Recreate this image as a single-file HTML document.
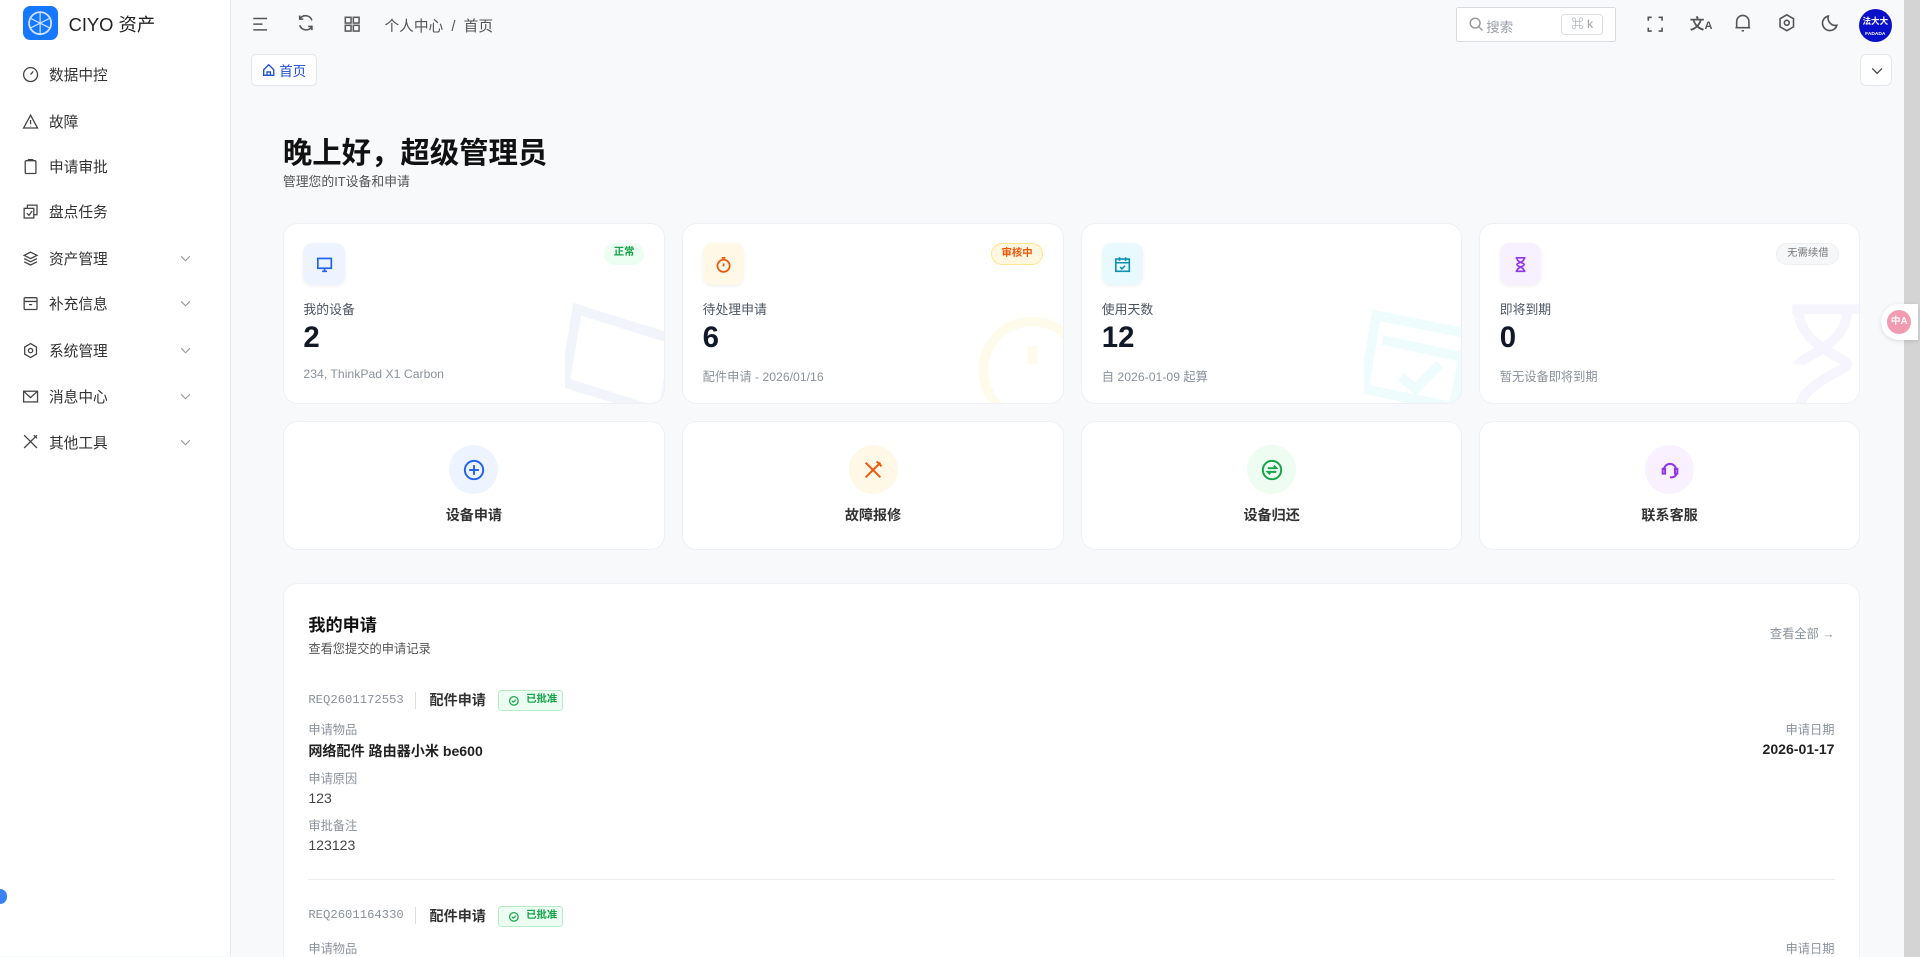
<!DOCTYPE html>
<html><head><meta charset="utf-8">
<style>
html{zoom:1.22449;overflow:hidden;background:#f8f9fb}
*{box-sizing:border-box;margin:0;padding:0}
body{width:1568px;height:781px;overflow:hidden;font-family:"Liberation Sans","Noto Sans CJK SC",sans-serif;background:#f8f9fb;color:#1f2937;position:relative}
.side{position:absolute;left:0;top:0;width:189px;height:781px;background:#fff;border-right:1px solid #e5e7eb}
.logo{position:absolute;left:19px;top:5px;width:28px;height:28px;border-radius:6px;background:#1677ff}
.brand{position:absolute;left:56px;top:9px;font-size:15px;color:#222}
.mi{position:absolute;left:18px;height:20px;display:flex;align-items:center;font-size:12px;color:#333;width:150px}
.mi svg{width:14px;height:14px;margin-right:8px}
.mi .ch{position:absolute;right:4px;width:9px;height:9px}
.top svg{position:absolute}
.crumb{position:absolute;left:314px;top:12px;font-size:12px;color:#555}
.search{position:absolute;left:1189px;top:6px;width:131px;height:28px;border:1px solid #d9dbe0;background:#fff;border-radius:2px;font-size:11px;color:#9aa0a8}
.kbd{position:absolute;right:10px;top:5px;width:34px;height:17px;border:1px solid #ddd;border-radius:3px;font-size:10px;text-align:center;line-height:15px}
.avatar{position:absolute;left:1518px;top:7px;width:27px;height:27px;border-radius:50%;background:#0a10c8;color:#fff;font-size:7px;font-weight:bold;text-align:center;line-height:9px;padding-top:6px}
.tab{position:absolute;left:205px;top:44px;width:54px;height:26px;background:#fff;border:1px solid #e5e7eb;border-radius:4px;font-size:11px;color:#1d4ed8;display:flex;align-items:center;justify-content:center;gap:3px}
.dd{position:absolute;left:1519px;top:44px;width:26px;height:26px;background:#fff;border:1px solid #e5e7eb;border-radius:5px}
.card{position:absolute;background:#fff;border:1px solid #eef0f3;border-radius:12px;overflow:hidden}
.ico{position:absolute;left:16px;top:16px;width:34px;height:34px;border-radius:8px;display:flex;align-items:center;justify-content:center;box-shadow:0 1px 3px rgba(0,0,0,.06)}
.lab{position:absolute;left:16px;top:61px;font-size:10.5px;color:#4b5563}
.num{position:absolute;left:16px;top:79px;font-size:24px;font-weight:bold;color:#111827}
.sub{position:absolute;left:16px;top:117px;font-size:10px;color:#8b929c}
.badge{position:absolute;right:16px;top:16px;height:18px;padding:0 8px;border-radius:9px;font-size:8.5px;line-height:17px;font-weight:bold}
.act{text-align:center}
.act .c{width:40px;height:40px;border-radius:50%;margin:19px auto 0;display:flex;align-items:center;justify-content:center}
.act .t{margin-top:9px;font-size:11.5px;color:#333;font-weight:bold}
.scroll{position:absolute;left:1555px;top:0;width:13px;height:782px;background:#d4d4d4}
.g{font-size:10px;color:#8b929c;position:absolute}
.ok{position:absolute;height:17px;width:53px;border:1px solid #b7ebc5;background:#ecfdf1;border-radius:3px;color:#16a34a;font-size:8.5px;line-height:15px;padding-left:22px;font-weight:bold}
</style></head><body>
<div class="side">
 <div class="logo"><svg width="28" height="28" viewBox="0 0 28 28"><circle cx="14" cy="14" r="9" fill="none" stroke="#cfe2ff" stroke-width="1.5"/><path d="M14 5v18M6 10l16 8M6 18l16-8" stroke="#cfe2ff" stroke-width="1"/></svg></div>
 <div class="brand">CIYO 资产</div>
 <div class="mi" style="top:51px"><svg viewBox="0 0 16 16" fill="none" stroke="#444" stroke-width="1.2"><circle cx="8" cy="8" r="6.5"/><path d="M8 8l2.5-3"/></svg>数据中控</div>
 <div class="mi" style="top:89px"><svg viewBox="0 0 16 16" fill="none" stroke="#444" stroke-width="1.2"><path d="M8 2L1.5 14h13z M8 6.5v4M8 12v.5"/></svg>故障</div>
 <div class="mi" style="top:126px"><svg viewBox="0 0 16 16" fill="none" stroke="#444" stroke-width="1.2"><rect x="3" y="2.5" width="10" height="12" rx="1"/><path d="M6 2.5v-1h4v1"/></svg>申请审批</div>
 <div class="mi" style="top:163px"><svg viewBox="0 0 16 16" fill="none" stroke="#444" stroke-width="1.2"><rect x="2" y="5" width="9" height="9"/><path d="M5 5V2h9v9h-3M4.5 9.5l2 2 3-4"/></svg>盘点任务</div>
 <div class="mi" style="top:201px"><svg viewBox="0 0 16 16" fill="none" stroke="#444" stroke-width="1.2"><path d="M8 2l6 3-6 3-6-3zM2 8l6 3 6-3M2 11l6 3 6-3"/></svg>资产管理<svg class="ch" viewBox="0 0 10 10" fill="none" stroke="#999"><path d="M1 3l4 4 4-4"/></svg></div>
 <div class="mi" style="top:238px"><svg viewBox="0 0 16 16" fill="none" stroke="#444" stroke-width="1.2"><rect x="2" y="2.5" width="12" height="11" rx="1"/><path d="M2 6h12M6.5 9h3"/></svg>补充信息<svg class="ch" viewBox="0 0 10 10" fill="none" stroke="#999"><path d="M1 3l4 4 4-4"/></svg></div>
 <div class="mi" style="top:276px"><svg viewBox="0 0 16 16" fill="none" stroke="#444" stroke-width="1.2"><path d="M8 1.5l5.5 3.2v6.6L8 14.5l-5.5-3.2V4.7z"/><circle cx="8" cy="8" r="2"/></svg>系统管理<svg class="ch" viewBox="0 0 10 10" fill="none" stroke="#999"><path d="M1 3l4 4 4-4"/></svg></div>
 <div class="mi" style="top:314px"><svg viewBox="0 0 16 16" fill="none" stroke="#444" stroke-width="1.2"><rect x="1.5" y="3" width="13" height="10"/><path d="M1.5 3L8 9l6.5-6"/></svg>消息中心<svg class="ch" viewBox="0 0 10 10" fill="none" stroke="#999"><path d="M1 3l4 4 4-4"/></svg></div>
 <div class="mi" style="top:351px"><svg viewBox="0 0 16 16" fill="none" stroke="#444" stroke-width="1.2"><path d="M2 2l12 12M14 2L2 14M11 2l3 3"/></svg>其他工具<svg class="ch" viewBox="0 0 10 10" fill="none" stroke="#999"><path d="M1 3l4 4 4-4"/></svg></div>
</div>
<div style="position:absolute;left:-6px;top:726px;width:12px;height:12px;border-radius:50%;background:#3b82f6"></div>
<div class="top">
 <svg style="left:205px;top:12px" width="15" height="15" viewBox="0 0 16 16" fill="none" stroke="#555" stroke-width="1.3"><path d="M2 3h12M2 8h8M2 13h12"/></svg>
 <svg style="left:242px;top:11px" width="16" height="16" viewBox="0 0 16 16" fill="none" stroke="#555" stroke-width="1.3"><path d="M13 6A5.5 5.5 0 0 0 3 5M3 10a5.5 5.5 0 0 0 10 1M3 2v3h3M13 14v-3h-3"/></svg>
 <svg style="left:280px;top:12px" width="15" height="15" viewBox="0 0 16 16" fill="none" stroke="#555" stroke-width="1.3"><rect x="2" y="2" width="5" height="5"/><rect x="9" y="2" width="5" height="5"/><rect x="2" y="9" width="5" height="5"/><rect x="9" y="9" width="5" height="5"/></svg>
 <div class="crumb">个人中心 &nbsp;/&nbsp; 首页</div>
 <div class="search"><svg style="left:10px;top:7px" width="12" height="12" viewBox="0 0 12 12" fill="none" stroke="#999" stroke-width="1.2"><circle cx="5" cy="5" r="4"/><path d="M8 8l3 3"/></svg><span style="position:absolute;left:24px;top:6px">搜索</span><div class="kbd">⌘ k</div></div>
 <svg style="left:1344px;top:12px" width="15" height="15" viewBox="0 0 16 16" fill="none" stroke="#555" stroke-width="1.4"><path d="M2 5V2h3M11 2h3v3M14 11v3h-3M5 14H2v-3"/></svg>
 <div style="position:absolute;left:1380px;top:11px;font-size:12px;color:#555;font-weight:bold">文<span style="font-size:9px">A</span></div>
 <svg style="left:1415px;top:11px" width="16" height="17" viewBox="0 0 16 17" fill="none" stroke="#555" stroke-width="1.3"><path d="M3 12V7a5 5 0 0 1 10 0v5zM2 12h12M7 14.5h2"/></svg>
 <svg style="left:1451px;top:11px" width="16" height="16" viewBox="0 0 16 16" fill="none" stroke="#555" stroke-width="1.3"><path d="M8 1.5l5.5 3.2v6.6L8 14.5l-5.5-3.2V4.7z"/><circle cx="8" cy="8" r="2"/></svg>
 <svg style="left:1487px;top:11px" width="16" height="16" viewBox="0 0 16 16" fill="none" stroke="#555" stroke-width="1.3"><path d="M13 10A6 6 0 0 1 6 2.5 6 6 0 1 0 13 10z"/></svg>
 <div class="avatar">法大大<br><span style="font-size:4px">FADADA</span></div>
</div>
<div class="tab"><svg width="11" height="11" viewBox="0 0 12 12" fill="none" stroke="#1d4ed8" stroke-width="1.2"><path d="M1.5 6L6 1.5 10.5 6v5h-9zM4.5 11V8h3v3"/></svg>首页</div>
<div class="dd"><svg style="position:absolute;left:8px;top:9px" width="10" height="8" viewBox="0 0 10 8" fill="none" stroke="#444"><path d="M1 2l4 4 4-4"/></svg></div>

<div style="position:absolute;left:231px;top:106px;font-size:24px;font-weight:bold;color:#111">晚上好，超级管理员</div>
<div style="position:absolute;left:231px;top:140px;font-size:10.5px;color:#555">管理您的IT设备和申请</div>

<div class="card" style="left:231px;top:182px;width:312px;height:148px">
 <svg style="position:absolute;left:230px;top:60px" width="100" height="100" viewBox="0 0 100 100" fill="none" stroke="#f1f4fb" stroke-width="8"><path d="M10 10l80 25-10 60-80-25z"/></svg>
 <div class="ico" style="background:#eef4ff"><svg width="14" height="14" viewBox="0 0 14 14" fill="none" stroke="#2563eb" stroke-width="1.4"><rect x="1.5" y="2" width="11" height="8"/><path d="M5 12.5h4M7 10v2.5"/></svg></div>
 <div class="badge" style="background:#ecfdf1;color:#16a34a">正常</div>
 <div class="lab">我的设备</div><div class="num">2</div><div class="sub">234, ThinkPad X1 Carbon</div>
</div>
<div class="card" style="left:557px;top:182px;width:312px;height:148px">
 <svg style="position:absolute;left:235px;top:60px" width="90" height="100" viewBox="0 0 90 100" fill="none" stroke="#fffbea" stroke-width="8"><circle cx="50" cy="60" r="40"/><path d="M50 40v15"/></svg>
 <div class="ico" style="background:#fff8e6"><svg width="14" height="14" viewBox="0 0 14 14" fill="none" stroke="#ea580c" stroke-width="1.4"><circle cx="7" cy="8" r="5"/><path d="M5.5 1.5h3M7 6v2.5"/></svg></div>
 <div class="badge" style="background:#fff7e0;color:#ea580c;border:1px solid #fde68a">审核中</div>
 <div class="lab">待处理申请</div><div class="num">6</div><div class="sub">配件申请 - 2026/01/16</div>
</div>
<div class="card" style="left:883px;top:182px;width:311px;height:148px">
 <svg style="position:absolute;left:230px;top:60px" width="90" height="100" viewBox="0 0 90 100" fill="none" stroke="#eefcfd" stroke-width="8"><path d="M10 15l75 15-12 60-73-15zM15 35l70 15M30 65l12 10 20-20"/></svg>
 <div class="ico" style="background:#e8fafd"><svg width="14" height="14" viewBox="0 0 14 14" fill="none" stroke="#0891b2" stroke-width="1.3"><rect x="1.5" y="2.5" width="11" height="10"/><path d="M1.5 5.5h11M4.5 1v3M9.5 1v3M5 9l1.5 1.5L9 8"/></svg></div>
 <div class="lab">使用天数</div><div class="num">12</div><div class="sub">自 2026-01-09 起算</div>
</div>
<div class="card" style="left:1208px;top:182px;width:311px;height:148px">
 <svg style="position:absolute;left:240px;top:60px" width="80" height="100" viewBox="0 0 80 100" fill="none" stroke="#f6f4fc" stroke-width="8"><path d="M15 10h55M15 95h55M20 10c0 30 40 40 40 45S20 70 20 95M60 10c0 30-40 40-40 45"/></svg>
 <div class="ico" style="background:#f7f0ff"><svg width="14" height="14" viewBox="0 0 14 14" fill="none" stroke="#9333ea" stroke-width="1.3"><path d="M3 1.5h8M3 12.5h8M4 1.5c0 4 6 4 6 5.5S4 9 4 12.5M10 1.5c0 4-6 4-6 5.5s6 2 6 5.5"/></svg></div>
 <div class="badge" style="background:#f6f7f9;color:#777;border:1px solid #eee;font-weight:normal">无需续借</div>
 <div class="lab">即将到期</div><div class="num">0</div><div class="sub">暂无设备即将到期</div>
</div>

<div class="card act" style="left:231px;top:344px;width:312px;height:105px"><div class="c" style="background:#eef4ff"><svg width="18" height="18" viewBox="0 0 18 18" fill="none" stroke="#2563eb" stroke-width="1.6"><circle cx="9" cy="9" r="7.5"/><path d="M9 5v8M5 9h8"/></svg></div><div class="t">设备申请</div></div>
<div class="card act" style="left:557px;top:344px;width:312px;height:105px"><div class="c" style="background:#fff8e6"><svg width="18" height="18" viewBox="0 0 18 18" fill="none" stroke="#ea580c" stroke-width="1.6"><path d="M3 3l12 12M15 3L3 15M12 2l4 4"/></svg></div><div class="t">故障报修</div></div>
<div class="card act" style="left:883px;top:344px;width:311px;height:105px"><div class="c" style="background:#eefcf2"><svg width="18" height="18" viewBox="0 0 18 18" fill="none" stroke="#16a34a" stroke-width="1.6"><circle cx="9" cy="9" r="7.5"/><path d="M5.5 7.5h7l-2-2M12.5 10.5h-7l2 2"/></svg></div><div class="t">设备归还</div></div>
<div class="card act" style="left:1208px;top:344px;width:311px;height:105px"><div class="c" style="background:#f9f1ff"><svg width="18" height="18" viewBox="0 0 18 18" fill="none" stroke="#9333ea" stroke-width="1.6"><path d="M4 9a5 5 0 0 1 10 0M3 8h2v4H3zM13 8h2v4h-2zM14 12c0 2-2 3-5 3"/></svg></div><div class="t">联系客服</div></div>

<div class="card" style="left:231px;top:476px;width:1288px;height:320px">
 <div style="position:absolute;left:20px;top:22px;font-size:14px;font-weight:bold;color:#111">我的申请</div>
 <div style="position:absolute;left:20px;top:45px;font-size:10px;color:#555">查看您提交的申请记录</div>
 <div style="position:absolute;right:20px;top:33px;font-size:10px;color:#8b929c">查看全部 →</div>
 <div class="g" style="left:20px;top:89px;font-family:'Liberation Mono',monospace">REQ2601172553</div>
 <div style="position:absolute;left:107px;top:88px;width:1px;height:14px;background:#ddd"></div>
 <div style="position:absolute;left:119px;top:87px;font-size:11.5px;font-weight:bold;color:#333">配件申请</div>
 <div class="ok" style="left:175px;top:87px"><svg style="position:absolute;left:8px;top:4px" width="8" height="8" viewBox="0 0 8 8" fill="none" stroke="#16a34a"><circle cx="4" cy="4" r="3.5"/><path d="M2.5 4l1 1 2-2"/></svg>已批准</div>
 <div class="g" style="left:20px;top:111px">申请物品</div>
 <div style="position:absolute;left:20px;top:128px;font-size:11.5px;font-weight:bold;color:#222">网络配件 路由器小米 be600</div>
 <div class="g" style="left:20px;top:151px">申请原因</div>
 <div style="position:absolute;left:20px;top:168px;font-size:11.5px;color:#444">123</div>
 <div class="g" style="left:20px;top:190px">审批备注</div>
 <div style="position:absolute;left:20px;top:207px;font-size:11.5px;color:#444">123123</div>
 <div class="g" style="right:20px;top:111px">申请日期</div>
 <div style="position:absolute;right:20px;top:128px;font-size:11.5px;font-weight:bold;color:#222">2026-01-17</div>
 <div style="position:absolute;left:20px;right:20px;top:241px;height:1px;background:#eee"></div>
 <div class="g" style="left:20px;top:265px;font-family:'Liberation Mono',monospace">REQ2601164330</div>
 <div style="position:absolute;left:107px;top:264px;width:1px;height:14px;background:#ddd"></div>
 <div style="position:absolute;left:119px;top:263px;font-size:11.5px;font-weight:bold;color:#333">配件申请</div>
 <div class="ok" style="left:175px;top:263px"><svg style="position:absolute;left:8px;top:4px" width="8" height="8" viewBox="0 0 8 8" fill="none" stroke="#16a34a"><circle cx="4" cy="4" r="3.5"/><path d="M2.5 4l1 1 2-2"/></svg>已批准</div>
 <div class="g" style="left:20px;top:290px">申请物品</div>
 <div class="g" style="right:20px;top:290px">申请日期</div>
</div>
<div class="scroll"></div>
<div style="position:absolute;left:1536px;top:248px;width:30px;height:30px;border-radius:15px 0 0 15px;background:#fff;box-shadow:0 1px 4px rgba(0,0,0,.12)"><div style="position:absolute;left:5px;top:5px;width:20px;height:20px;border-radius:50%;background:#f29bb0;color:#fff;font-size:8px;text-align:center;line-height:20px;font-weight:bold">中A</div></div>
</body></html>
